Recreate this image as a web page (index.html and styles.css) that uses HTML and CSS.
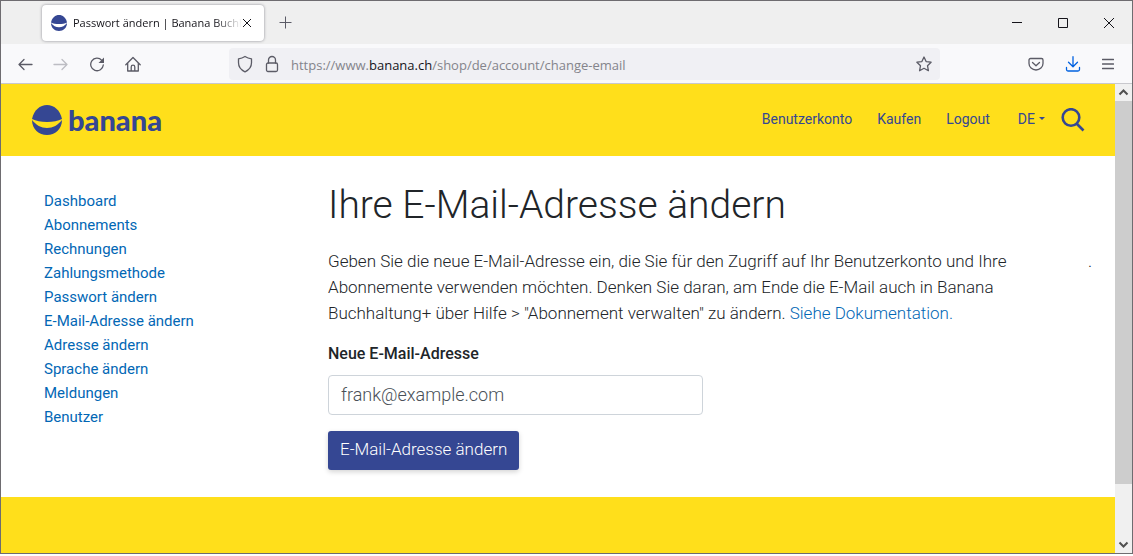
FILE: index.html
```html
<!DOCTYPE html>
<html lang="de">
<head>
<meta charset="utf-8">
<title>Passwort ändern | Banana Buchhaltung</title>
<link rel="stylesheet" href="styles.css">
</head>
<body>
<div class="window">
  <div class="titlebar">
    <div class="tab">
      <svg class="favicon" viewBox="0 0 30 30" aria-hidden="true"><path d="M0 14C2 5 8 0 15 0s13 5 15 14c-4 2-9 3-15 3S4 16 0 14z"/><path d="M0 15c4 5 9 8 15 8s11-3 15-8c0 9-7 15-15 15S0 24 0 15z"/></svg>
      <span class="tab-title">Passwort ändern | Banana Buchh</span>
      <button class="tab-close" type="button" aria-label="Tab schließen"><svg width="10" height="10" viewBox="0 0 10 10"><path d="M1 1l8 8M9 1L1 9"/></svg></button>
    </div>
    <button class="new-tab" type="button" aria-label="Neuer Tab"><svg width="13" height="13" viewBox="0 0 13 13"><path d="M6.500 .5v12M.5 6.500h12"/></svg></button>
    <div class="window-controls">
      <button type="button" aria-label="Minimieren"><svg width="10" height="10" viewBox="0 0 10 10"><path d="M0 4.500h10"/></svg></button>
      <button type="button" aria-label="Maximieren"><svg width="10" height="10" viewBox="0 0 10 10"><path d="M.5.5h9v9h-9z"/></svg></button>
      <button type="button" aria-label="Schließen"><svg width="10" height="10" viewBox="0 0 10 10"><path d="M0 0l10 10M10 0L0 10"/></svg></button>
    </div>
  </div>

  <div class="toolbar">
    <div class="nav-buttons">
      <button type="button" aria-label="Zurück"><svg width="16" height="16" viewBox="0 0 16 16"><path d="M15 8.500H2M7 3.500l-5 5 5 5"/></svg></button>
      <button type="button" class="disabled" aria-label="Vor" disabled><svg width="16" height="16" viewBox="0 0 16 16"><path d="M1 8.500h13M9 3.500l5 5-5 5"/></svg></button>
      <button type="button" aria-label="Neu laden"><svg width="16" height="16" viewBox="0 0 16 16"><path d="M12.800 4.300A6.300 6.300 0 1 0 14.300 9"/><path class="solid" d="M15 1.500v5.500H9.500z"/></svg></button>
      <button type="button" aria-label="Startseite"><svg width="16" height="16" viewBox="0 0 16 16"><path d="M.8 8.800L8 1.500l7.200 7.300M2.700 7v8h10.600V7M6.200 14.500v-3.500a1.800 1.800 0 0 1 3.600 0v3.500"/></svg></button>
    </div>
    <div class="address">
      <svg width="16" height="18" viewBox="0 0 16 18" aria-hidden="true"><path d="M8 1.500c2 1.300 4 2 6.500 2.300v4c0 4-2 7-6.500 9-4.500-2-6.500-5-6.500-9v-4C4 3.500 6 2.800 8 1.500z"/></svg>
      <svg width="14" height="18" viewBox="0 0 14 18" aria-hidden="true"><rect x="1.500" y="8" width="11" height="8.500" rx="1.500"/><path d="M3.500 8V5a3.500 3.500 0 0 1 7 0v3"/></svg>
      <span class="url">https://www.<b>banana.ch</b>/shop/de/account/change-email</span>
      <button type="button" aria-label="Lesezeichen"><svg width="16" height="16" viewBox="0 0 16 16"><path d="M8 1l2.100 4.600 5 .6-3.600 3.500.9 5L8 12.300l-4.400 2.400.9-5L.9 6.200l5-.6z"/></svg></button>
    </div>
    <div class="tools">
      <button type="button" aria-label="Pocket"><svg width="16" height="16" viewBox="0 0 16 16"><path d="M2.500 2.500h11a1.500 1.500 0 0 1 1.500 1.500v3.500a7 6.500 0 0 1-14 0V4a1.500 1.500 0 0 1 1.500-1.500zM4.500 6.500L8 9.700l3.500-3.200"/></svg></button>
      <button type="button" class="download" aria-label="Downloads"><svg width="16" height="16" viewBox="0 0 16 16"><path d="M8 .7v10M3.500 6.200L8 10.700l4.500-4.500M1.500 11.500v2a1.500 1.500 0 0 0 1.500 1.500h10a1.500 1.500 0 0 0 1.500-1.500v-2"/></svg></button>
      <button type="button" aria-label="Menü"><svg width="12" height="12" viewBox="0 0 12 12"><path d="M.5 1.500h11M.5 6h11M.5 10.500h11"/></svg></button>
    </div>
  </div>

  <div class="viewport">
    <div class="page">
      <header class="site-header">
        <a class="brand" href="#"><svg width="30" height="30" viewBox="0 0 30 30" aria-hidden="true"><path d="M0 14C2 5 8 0 15 0s13 5 15 14c-4 2-9 3-15 3S4 16 0 14z"/><path d="M0 15c4 5 9 8 15 8s11-3 15-8c0 9-7 15-15 15S0 24 0 15z"/></svg><span>banana</span></a>
        <nav class="site-nav">
          <a href="#">Benutzerkonto</a>
          <a href="#">Kaufen</a>
          <a href="#">Logout</a>
          <button class="language" type="button">DE<span class="caret"></span></button>
          <button class="search" type="button" aria-label="Suche"><svg width="24" height="24" viewBox="0 0 24 24"><circle cx="10" cy="9.500" r="8.300"/><path d="M15.500 15.500l7 7"/></svg></button>
        </nav>
      </header>

      <div class="content">
        <nav class="account-nav">
          <a href="#">Dashboard</a>
          <a href="#">Abonnements</a>
          <a href="#">Rechnungen</a>
          <a href="#">Zahlungsmethode</a>
          <a href="#">Passwort ändern</a>
          <a href="#">E-Mail-Adresse ändern</a>
          <a href="#">Adresse ändern</a>
          <a href="#">Sprache ändern</a>
          <a href="#">Meldungen</a>
          <a href="#">Benutzer</a>
        </nav>
        <main>
          <h1>Ihre E-Mail-Adresse ändern</h1>
          <div class="intro">
            <p>Geben Sie die neue E-Mail-Adresse ein, die Sie für den Zugriff auf Ihr Benutzerkonto und Ihre Abonnemente verwenden möchten. Denken Sie daran, am Ende die E-Mail auch in Banana Buchhaltung+ über Hilfe &gt; "Abonnement verwalten" zu ändern. <a href="#">Siehe Dokumentation.</a></p>
            <span class="dot">.</span>
          </div>
          <form>
            <label for="email">Neue E-Mail-Adresse</label>
            <input id="email" type="email" value="frank@example.com">
            <button class="submit" type="button">E-Mail-Adresse ändern</button>
          </form>
        </main>
      </div>
      <footer class="site-footer"></footer>
    </div>
    <div class="scrollbar" aria-hidden="true">
      <svg width="17" height="17" viewBox="0 0 17 17"><path d="M4.500 10.500l4-4 4 4"/></svg>
      <div class="track"><div class="thumb"></div></div>
      <svg width="17" height="17" viewBox="0 0 17 17"><path d="M4.500 6.500l4 4 4-4"/></svg>
    </div>
  </div>
</div>
</body>
</html>
```
FILE: styles.css
```css
* { box-sizing: border-box; }

body {
  margin: 0;
  padding-bottom: 2px;
  height: 100vh;
  background: #fff;
  color: #212529;
  font-family: Roboto, "Liberation Sans", sans-serif;
}

button {
  border: 0;
  padding: 0;
  background: none;
  font: inherit;
  color: inherit;
}

a { color: #0267b5; text-decoration: none; }

svg { display: block; flex: none; fill: none; stroke: currentColor; }

.window {
  height: 100%;
  display: flex;
  flex-direction: column;
  border: 1px solid #6e6c70;
}

.titlebar {
  display: flex;
  align-items: center;
  height: 43px;
  padding: 0 18px 0 41px;
  background: #efefef;
  color: #15141a;
}

.tab {
  display: flex;
  align-items: center;
  width: 222px;
  height: 36px;
  padding: 0 12px 0 9px;
  border-radius: 4px;
  background: #fff;
  box-shadow: 0 0 3px #8c8c94;
}

.favicon { width: 16px; height: 16px; fill: #354793; stroke: none; }

.tab-title {
  flex: 1;
  min-width: 0;
  margin-left: 6px;
  white-space: nowrap;
  font-family: "Open Sans", sans-serif;
  font-size: 11px;
  color: #15141a;
  -webkit-mask-image: linear-gradient(to right, #000 84%, transparent);
  mask-image: linear-gradient(to right, #000 84%, transparent);
}

.new-tab { margin-left: 15px; color: #5b5b66; }
.new-tab svg { stroke-width: 1; }

.window-controls { display: flex; gap: 36px; margin-left: auto; }

.toolbar {
  display: flex;
  align-items: center;
  height: 40px;
  padding: 0 18px 0 16px;
  border-bottom: 1px solid #c8c8cd;
  background: #f9f9fb;
  color: #5b5b66;
}

.toolbar svg { stroke-width: 1.3; stroke-linecap: round; stroke-linejoin: round; }
.toolbar .solid { fill: currentColor; stroke: none; }
.nav-buttons { display: flex; gap: 20px; }
.nav-buttons .disabled { color: #bdbdc3; }

.address {
  display: flex;
  flex: 1;
  align-items: center;
  gap: 12px;
  height: 32px;
  margin: 0 88px;
  padding: 0 8px;
  border-radius: 4px;
  background: #f0f0f4;
}

.url {
  flex: 1;
  padding-top: 3px;
  font-family: "Open Sans", sans-serif;
  font-size: 13px;
  color: #84848b;
}

.url b { font-weight: 400; color: #15141a; }

.tools { display: flex; align-items: center; gap: 21px; }
.tools .download { color: #0061e0; }

.viewport { display: flex; flex: 1; min-height: 0; }

.page { display: flex; flex: 1; flex-direction: column; min-width: 0; }

.site-header {
  display: flex;
  align-items: center;
  justify-content: space-between;
  height: 72px;
  padding: 0 30px 0 31px;
  background: #ffdf1b;
}

.brand {
  display: flex;
  align-items: center;
  gap: 6px;
  color: #354793;
  font-family: Lato, sans-serif;
  font-size: 29px;
  font-weight: 900;
  line-height: 30px;
}

.brand svg { fill: currentColor; stroke: none; }

.site-nav {
  display: flex;
  align-items: center;
  gap: 25px;
  font-size: 14px;
  line-height: 20px;
  color: #354793;
}

.site-nav a, .language { padding-bottom: 3px; }
.site-nav a { color: inherit; }
.language { display: flex; align-items: center; gap: 4px; margin-left: 3px; }
.caret { border: 3px solid transparent; border-top-color: currentColor; border-bottom: 0; }
.search { margin-left: -9px; }
.search svg { stroke-width: 2.6; }

.content {
  display: grid;
  grid-template-columns: 284px 1fr;
  padding: 24px 23px 27px 43px;
}

.account-nav {
  display: flex;
  flex-direction: column;
  align-items: flex-start;
  padding-top: 9px;
  font-size: 15px;
  line-height: 24px;
}

h1 {
  margin: 0 0 18px;
  font-size: 39px;
  font-weight: 300;
  line-height: 50px;
}

.intro {
  display: flex;
  justify-content: space-between;
  font-size: 17px;
  font-weight: 300;
  line-height: 26px;
}

.intro p { max-width: 700px; margin: 0 0 16px; }

form { display: flex; flex-direction: column; align-items: flex-start; }

label {
  margin-bottom: 9px;
  font-size: 16px;
  font-weight: 500;
  line-height: 24px;
}

input {
  width: 100%;
  max-width: 375px;
  height: 40px;
  padding: 0 12px 2px;
  border: 1px solid #ced4da;
  border-radius: 4px;
  background: #fff;
  font: inherit;
  font-size: 18px;
  font-weight: 300;
  color: #495057;
}

.submit {
  margin-top: 16px;
  padding: 0 12px 2px;
  border-radius: 3px;
  background: #354793;
  box-shadow: 0 2px 5px #0000002b;
  font-size: 17px;
  font-weight: 300;
  line-height: 37px;
  color: #fff;
}

.site-footer { flex: 1; background: #ffdf1b; }

.scrollbar {
  display: flex;
  flex-direction: column;
  width: 17px;
  background: #f0f0f0;
  color: #505050;
}

.scrollbar svg { stroke-width: 2; }
.track { flex: 1; }
.thumb { height: 88%; background: #cdcdcd; }
```
